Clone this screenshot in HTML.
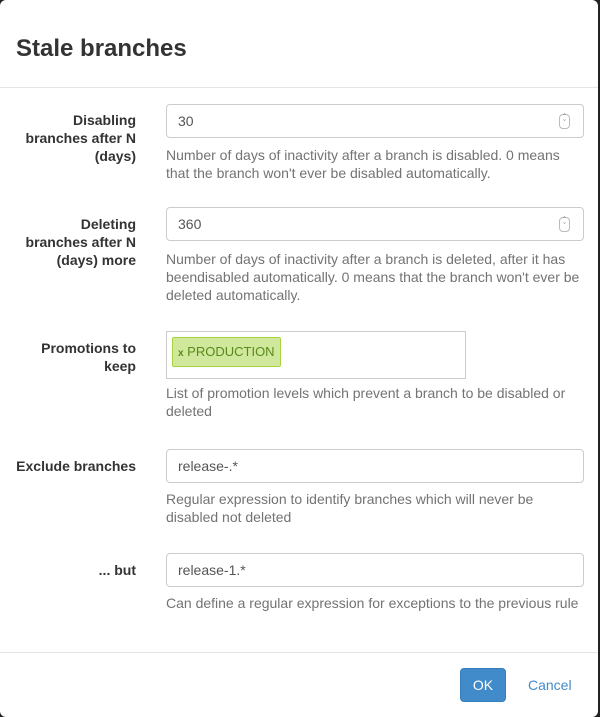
<!DOCTYPE html>
<html><head><style>
body{margin:0;width:600px;height:717px;background:#222;font-family:"Liberation Sans",Arial,sans-serif;overflow:hidden;position:relative}
.m{position:absolute;left:0;top:0;width:598px;height:717px;background:#fff;border-radius:6px}
.t{position:absolute;left:16px;top:34px;font-size:24px;font-weight:bold;color:#333;line-height:30px}
.hr{position:absolute;left:0;width:598px;height:1px;background:#e5e5e5}
.l{position:absolute;right:462px;text-align:right;font-size:14px;font-weight:bold;color:#333;line-height:18px}
.i{position:absolute;left:166px;height:32px;border:1px solid #ccc;border-radius:4px;font-size:14px;color:#555;line-height:32px;padding-left:11px;box-sizing:content-box;width:405px}
.h{position:absolute;left:166px;font-size:14px;color:#737373;line-height:18px;width:414px}
.sp{position:absolute;right:13px;top:9px;width:9px;height:13px;border:1px solid #bbb;border-radius:4px;font-size:7px;line-height:6px;text-align:center;color:#555}
</style></head><body><div class="m">
<div class="t">Stale branches</div>
<div class="hr" style="top:87px"></div>
<div class="l" style="top:111px">Disabling<br>branches after N<br>(days)</div>
<div class="i" style="top:104px">30<div class="sp">ˆ<br>ˇ</div></div>
<div class="h" style="top:146px">Number of days of inactivity after a branch is disabled. 0 means that the branch won't ever be disabled automatically.</div>
<div class="l" style="top:215px">Deleting<br>branches after N<br>(days) more</div>
<div class="i" style="top:207px">360<div class="sp">ˆ<br>ˇ</div></div>
<div class="h" style="top:250px">Number of days of inactivity after a branch is deleted, after it has beendisabled automatically. 0 means that the branch won't ever be deleted automatically.</div>
<div class="l" style="top:339px">Promotions to<br>keep</div>
<div style="position:absolute;left:166px;top:331px;width:298px;height:46px;border:1px solid #ccc"></div>
<div style="position:absolute;left:172px;top:337px;background:#cfe89c;border:1px solid #a5d642;border-radius:2px;font-size:13px;color:#5a8a1c;line-height:28px;padding-left:5px;box-sizing:border-box;width:109px;height:30px"><span style="font-size:10px;font-weight:bold">x</span> PRODUCTION</div>
<div class="h" style="top:384px">List of promotion levels which prevent a branch to be disabled or deleted</div>
<div class="l" style="top:457px">Exclude branches</div>
<div class="i" style="top:449px">release-.*</div>
<div class="h" style="top:490px">Regular expression to identify branches which will never be disabled not deleted</div>
<div class="l" style="top:561px">... but</div>
<div class="i" style="top:553px">release-1.*</div>
<div class="h" style="top:594px">Can define a regular expression for exceptions to the previous rule</div>
<div class="hr" style="top:652px"></div>
<div style="position:absolute;left:460px;top:668px;width:46px;height:34px;background:#428bca;border:1px solid #357ebd;border-radius:4px;box-sizing:border-box;color:#fff;font-size:14px;line-height:32px;text-align:center">OK</div>
<div style="position:absolute;left:528px;top:677px;font-size:14px;color:#428bca">Cancel</div>
</div></body></html>
